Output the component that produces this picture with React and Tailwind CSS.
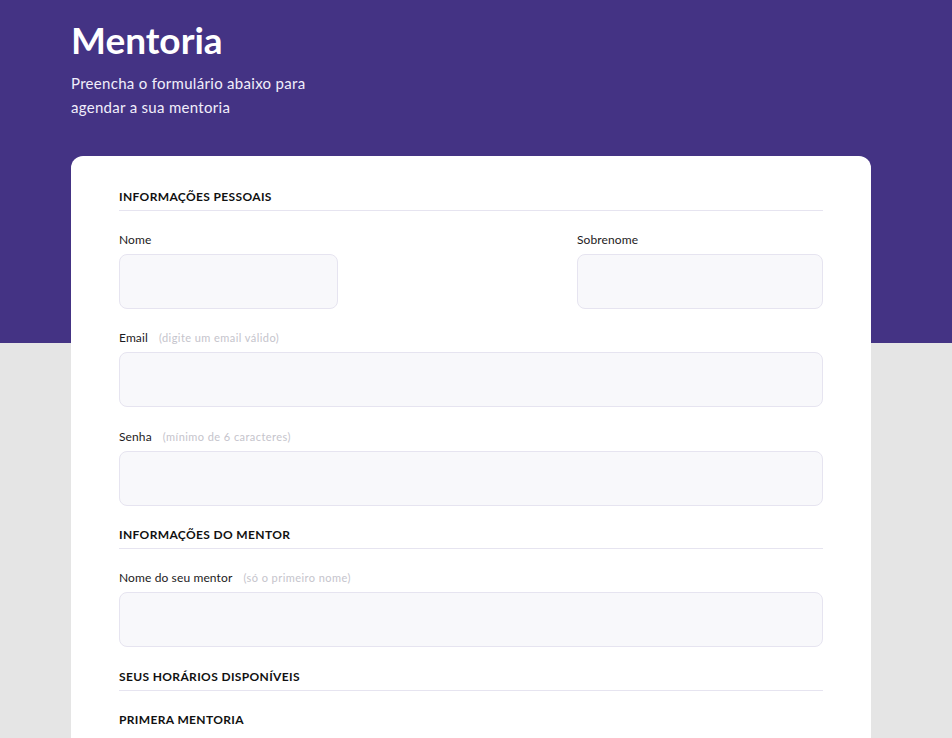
export default function App() {
  const font = { fontFamily: '"Lato", "Noto Sans", sans-serif' };
  const inputCls = "h-[55px] rounded-[8px] border border-[#e6e4f0] bg-[#f8f8fb]";
  const Label = ({ children, hint }) => (
    <div className="mb-[6px] flex items-center h-4 text-[12px] leading-4 text-[#1c1a22] tracking-[0.01em]">
      <span>{children}</span>
      {hint && <span className="ml-[11px] text-[11px] tracking-[0.04em] text-[#c5c4cc]">{hint}</span>}
    </div>
  );
  const Header = ({ children }) => (
    <div className="pb-[5px] border-b border-[#e6e4f0] text-[12px] leading-4 font-bold text-[#111] tracking-[0.03em]">
      {children}
    </div>
  );
  return (
    <div style={font} className="min-h-screen bg-[linear-gradient(to_bottom,#443384_343px,#e5e5e5_343px)]">
      <div className="ml-[71px] w-[800px]">
        <div className="pt-[18px] pb-[37px]">
          <h1 className="text-[37px] leading-[44px] font-bold text-white">Mentoria</h1>
          <p className="mt-[9px] w-[250px] text-[15px] leading-6 tracking-[0.02em] text-[#f1eefb]">
            Preencha o formulário abaixo para agendar a sua mentoria
          </p>
        </div>
        <div className="rounded-t-[12px] bg-white px-12 pt-[33px] pb-10 flex flex-col gap-[21px]">
          <Header>INFORMAÇÕES PESSOAIS</Header>
          <div className="flex justify-between">
            <div className="w-[219px]">
              <Label>Nome</Label>
              <div className={inputCls} />
            </div>
            <div className="w-[246px]">
              <Label>Sobrenome</Label>
              <div className={inputCls} />
            </div>
          </div>
          <div className="pb-px">
            <Label hint="(digite um email válido)">Email</Label>
            <div className={inputCls} />
          </div>
          <div>
            <Label hint="(mínimo de 6 caracteres)">Senha</Label>
            <div className={inputCls} />
          </div>
          <Header>INFORMAÇÕES DO MENTOR</Header>
          <div className="pb-px">
            <Label hint="(só o primeiro nome)">Nome do seu mentor</Label>
            <div className={inputCls} />
          </div>
          <Header>SEUS HORÁRIOS DISPONÍVEIS</Header>
          <div className="text-[12px] leading-4 font-bold text-[#111] tracking-[0.03em]">PRIMERA MENTORIA</div>
          <div className="h-[200px]" />
        </div>
      </div>
    </div>
  );
}
